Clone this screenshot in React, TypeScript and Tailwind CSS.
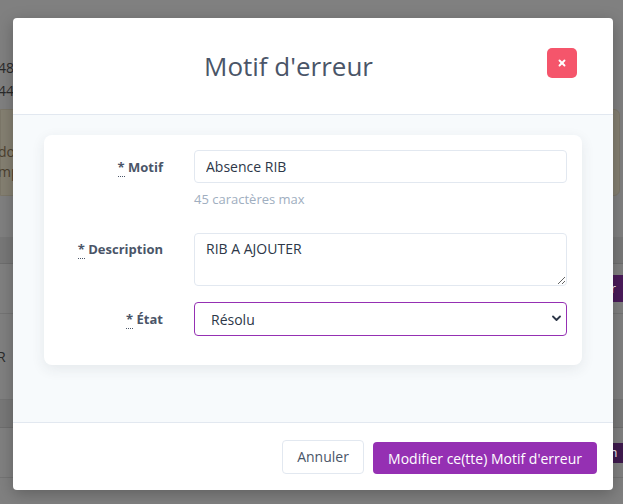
import { X } from 'lucide-react';

function Req() {
  return (
    <abbr title="obligatoire" className="no-underline border-b border-dotted border-[#4a5568] cursor-help">
      *
    </abbr>
  );
}

function Background() {
  return (
    <div className="absolute inset-0 bg-[#808080] text-[14px] text-[#2a2a2a]">
      <div className="h-[56px]" />
      <div className="leading-[23px] pl-0">
        <div className="-ml-[2px]">48</div>
        <div className="-ml-[2px]">44</div>
      </div>
      <div className="mt-[7px] h-[87px] mr-[3px] rounded-r-[6px] bg-[#858072] border border-[#7c7769] pt-[32px] leading-[20px] text-[#4d4230]">
        <div className="-ml-[3px]">do</div>
        <div className="-ml-[3px]">mp</div>
      </div>
      <div className="mt-[41px] h-[27px] bg-[#787878] border-b border-[#6e6e6e]" />
      <div className="h-[50px] border-b border-[#747474] flex justify-end items-center">
        <div className="w-[30px] h-[27px] rounded-l-[4px] bg-[#4a1a5a] text-white text-[12px] leading-[27px] pl-[18px]">r</div>
      </div>
      <div className="h-[86px] flex items-center -ml-[3px] border-b border-[#747474]">R</div>
      <div className="h-[28px] bg-[#787878] border-b border-[#6e6e6e]" />
      <div className="h-[50px] border-b border-[#747474] flex justify-end items-center">
        <div className="w-[24px] h-[20px] rounded-l-full bg-[#3f1a4e] text-white text-[12px] leading-[20px] pl-[11px]">n</div>
      </div>
    </div>
  );
}

export default function App() {
  return (
    <div className="relative h-[504px] w-full overflow-hidden font-['Open_Sans',_'Noto_Sans',_sans-serif]">
      <Background />

      <div className="absolute left-[13px] top-[18px] w-[600px] h-[472px] bg-white rounded-[4px] shadow-[0_4px_16px_rgba(0,0,0,0.25)] flex flex-col overflow-hidden">
        <div className="h-[97px] shrink-0 flex items-start pt-[30px] pl-[31px] pr-[36px] border-b border-[#e2e8f0]">
          <h2 className="flex-1 text-center text-[26px] leading-[36px] text-[#4a5568] mr-[14px]">Motif d'erreur</h2>
          <button className="w-[30px] h-[30px] rounded-[5px] bg-[#f5556b] flex items-center justify-center text-white">
            <X size={10} strokeWidth={4.5} />
          </button>
        </div>

        <div className="flex-1 bg-[#f7fafc] px-[31px] pt-[20px]">
          <div className="bg-white rounded-[8px] shadow-[0_4px_14px_rgba(45,55,72,0.09)] h-[230px] pl-[15px] pr-[15px] pt-[15px]">
            <div className="flex">
              <label className="w-[104px] text-right text-[13px] font-bold text-[#4a5568] pt-[7px] leading-[20px]">
                <Req /> Motif
              </label>
              <div className="flex-1 ml-[31px]">
                <input
                  readOnly
                  value="Absence RIB"
                  className="w-full h-[33px] rounded-[4px] border border-[#e2e8f0] px-[11px] text-[14px] text-[#2d3748] outline-none"
                />
                <div className="mt-[7px] text-[13px] leading-[18px] text-[#a0aec0]">45 caractères max</div>
              </div>
            </div>

            <div className="flex mt-[25px]">
              <label className="w-[104px] text-right text-[13px] font-bold text-[#4a5568] pt-[6px] leading-[20px]">
                <Req /> Description
              </label>
              <div className="flex-1 ml-[31px]">
                <textarea
                  readOnly
                  value="RIB A AJOUTER"
                  className="block w-full h-[53px] rounded-[4px] border border-[#e2e8f0] px-[11px] py-[5px] text-[14px] leading-[20px] text-[#2d3748] outline-none"
                />
              </div>
            </div>

            <div className="flex mt-[16px]">
              <label className="w-[104px] text-right text-[13px] font-bold text-[#4a5568] pt-[7px] leading-[20px]">
                <Req /> État
              </label>
              <div className="flex-1 ml-[31px] relative">
                <select
                  defaultValue="resolu"
                  className="appearance-none w-full h-[34px] rounded-[4px] border border-[#9530b3] bg-white pl-[16px] pr-[30px] text-[14px] text-[#2d3748] outline-none"
                >
                  <option value="resolu">Résolu</option>
                  <option value="encours">En cours</option>
                </select>
                <svg
                  className="absolute right-[6px] top-[13px] pointer-events-none"
                  width="9"
                  height="7"
                  viewBox="0 0 9 7"
                  fill="none"
                >
                  <path d="M1 1.5 L4.5 5 L8 1.5" stroke="#2d3748" strokeWidth="1.8" strokeLinecap="round" strokeLinejoin="round" />
                </svg>
              </div>
            </div>
          </div>
        </div>

        <div className="h-[68px] shrink-0 border-t border-[#e2e8f0] flex items-center justify-end gap-[9px] pr-[16px]">
          <button className="h-[34px] w-[82px] rounded-[4px] border border-[#e2e8f0] bg-white text-[14px] text-[#4a5568]">
            Annuler
          </button>
          <button className="h-[32px] mt-[3px] w-[224px] rounded-[4px] bg-[#9530b3] text-[14px] font-medium text-white">
            Modifier ce(tte) Motif d'erreur
          </button>
        </div>
      </div>
    </div>
  );
}
